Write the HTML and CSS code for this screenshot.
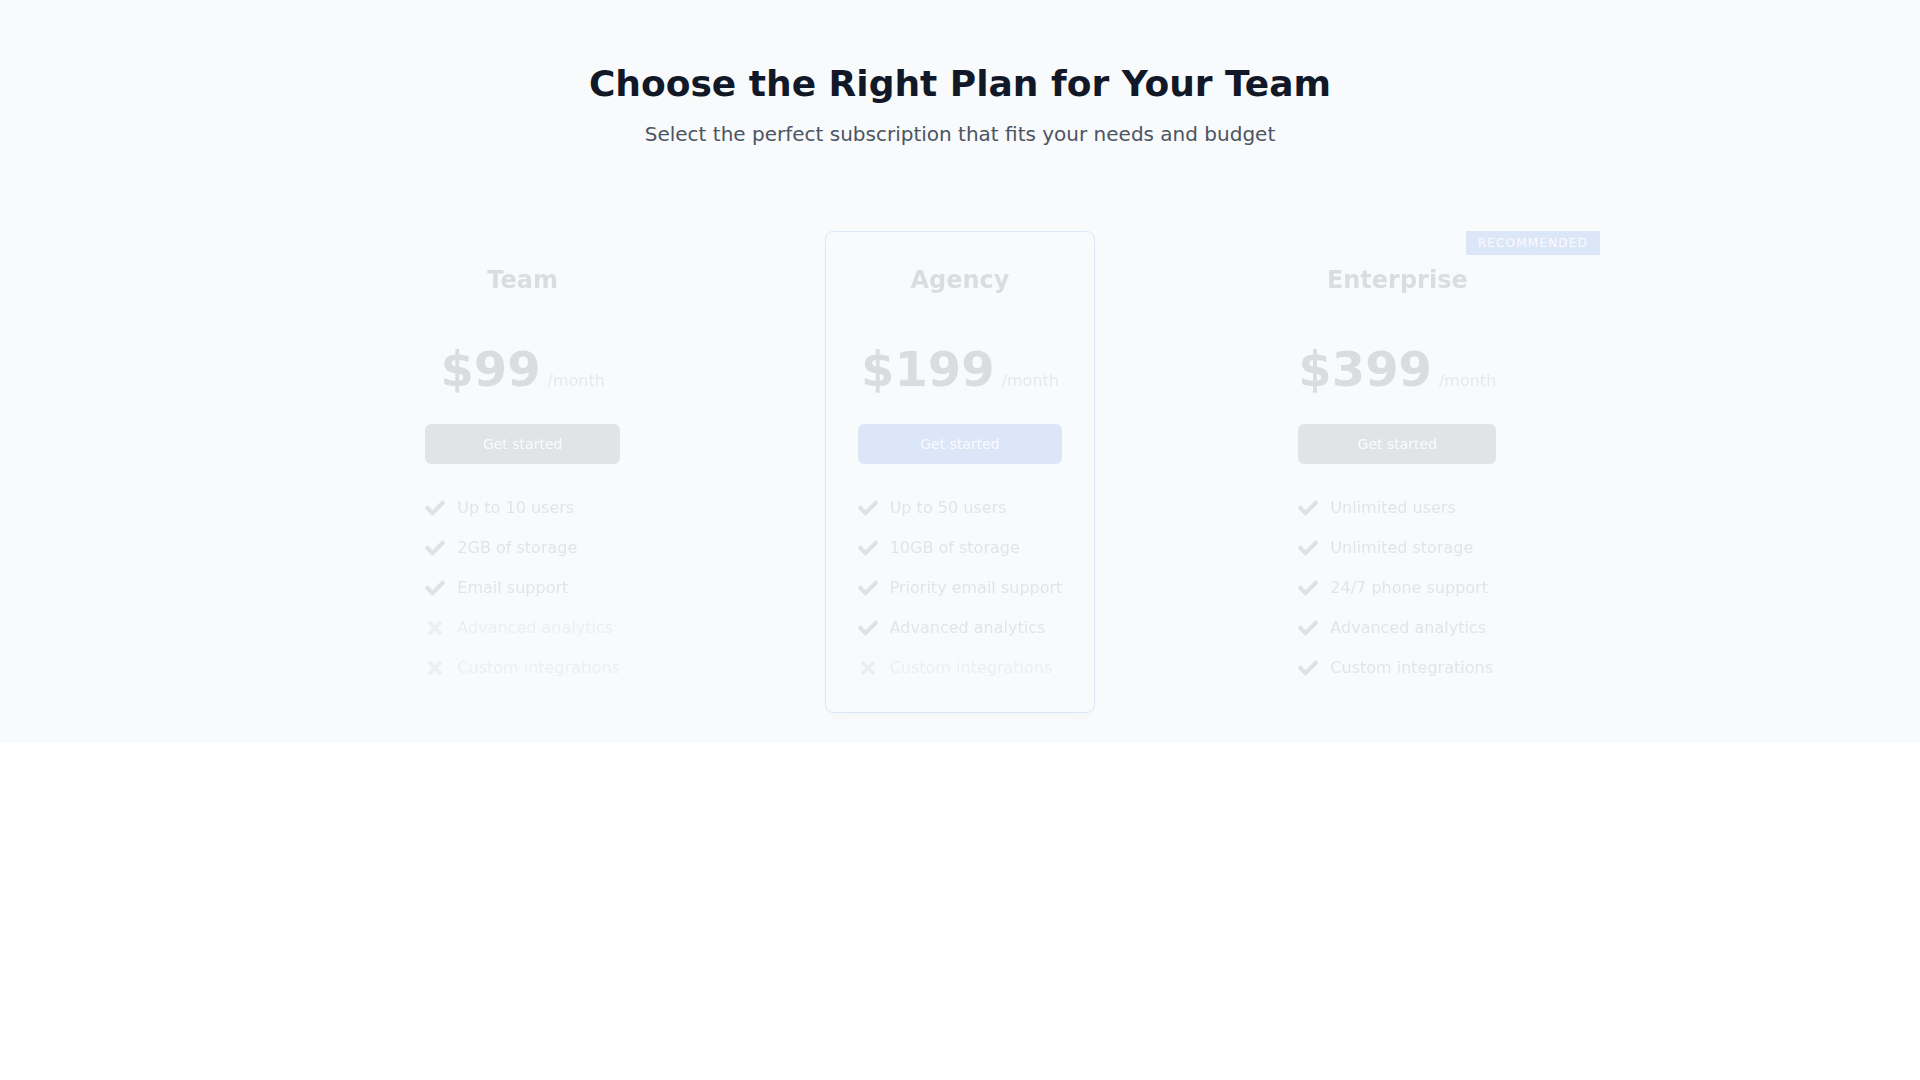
FILE: index.html
```html
<!DOCTYPE html>
<html lang="en">
<head>
<meta charset="utf-8">
<title>Pricing</title>
<link rel="stylesheet" href="styles.css">
</head>
<body>
<section class="pricing">
  <header class="pricing-header">
    <h1 class="pricing-title">Choose the Right Plan for Your Team</h1>
    <p class="pricing-subtitle">Select the perfect subscription that fits your needs and budget</p>
  </header>

  <div class="plans">
    <div class="plan-cell">
      <div class="plan-card">
        <h2 class="plan-name">Team</h2>
        <div class="plan-price"><span class="price-amount">$99</span><span class="price-period">/month</span></div>
        <button class="plan-btn">Get started</button>
        <ul class="features">
          <li class="feature"><svg class="icon icon-check" viewBox="0 0 512 512"><path d="M173.898 439.404l-166.4-166.4c-9.997-9.997-9.997-26.206 0-36.204l36.203-36.204c9.997-9.998 26.207-9.998 36.204 0L192 312.69 432.095 72.596c9.997-9.997 26.207-9.997 36.204 0l36.203 36.204c9.997 9.997 9.997 26.206 0 36.204l-294.4 294.401c-9.998 9.997-26.207 9.997-36.204-.001z"/></svg><span>Up to 10 users</span></li>
          <li class="feature"><svg class="icon icon-check" viewBox="0 0 512 512"><path d="M173.898 439.404l-166.4-166.4c-9.997-9.997-9.997-26.206 0-36.204l36.203-36.204c9.997-9.998 26.207-9.998 36.204 0L192 312.69 432.095 72.596c9.997-9.997 26.207-9.997 36.204 0l36.203 36.204c9.997 9.997 9.997 26.206 0 36.204l-294.4 294.401c-9.998 9.997-26.207 9.997-36.204-.001z"/></svg><span>2GB of storage</span></li>
          <li class="feature"><svg class="icon icon-check" viewBox="0 0 512 512"><path d="M173.898 439.404l-166.4-166.4c-9.997-9.997-9.997-26.206 0-36.204l36.203-36.204c9.997-9.998 26.207-9.998 36.204 0L192 312.69 432.095 72.596c9.997-9.997 26.207-9.997 36.204 0l36.203 36.204c9.997 9.997 9.997 26.206 0 36.204l-294.4 294.401c-9.998 9.997-26.207 9.997-36.204-.001z"/></svg><span>Email support</span></li>
          <li class="feature feature-off"><svg class="icon icon-x" viewBox="0 0 352 512"><path d="M242.72 256l100.07-100.07c12.28-12.28 12.28-32.19 0-44.48l-22.24-22.24c-12.28-12.28-32.19-12.28-44.48 0L176 189.28 75.93 89.21c-12.28-12.28-32.19-12.28-44.48 0L9.21 111.45c-12.28 12.28-12.28 32.19 0 44.48L109.28 256 9.21 356.07c-12.28 12.28-12.28 32.19 0 44.48l22.24 22.24c12.28 12.28 32.2 12.28 44.48 0L176 322.72l100.07 100.07c12.28 12.28 32.2 12.28 44.48 0l22.24-22.24c12.28-12.28 12.28-32.19 0-44.48L242.72 256z"/></svg><span>Advanced analytics</span></li>
          <li class="feature feature-off"><svg class="icon icon-x" viewBox="0 0 352 512"><path d="M242.72 256l100.07-100.07c12.28-12.28 12.28-32.19 0-44.48l-22.24-22.24c-12.28-12.28-32.19-12.28-44.48 0L176 189.28 75.93 89.21c-12.28-12.28-32.19-12.28-44.48 0L9.21 111.45c-12.28 12.28-12.28 32.19 0 44.48L109.28 256 9.21 356.07c-12.28 12.28-12.28 32.19 0 44.48l22.24 22.24c12.28 12.28 32.2 12.28 44.48 0L176 322.72l100.07 100.07c12.28 12.28 32.2 12.28 44.48 0l22.24-22.24c12.28-12.28 12.28-32.19 0-44.48L242.72 256z"/></svg><span>Custom integrations</span></li>
        </ul>
      </div>
    </div>

    <div class="plan-cell">
      <div class="plan-card plan-card-featured">
        <h2 class="plan-name">Agency</h2>
        <div class="plan-price"><span class="price-amount">$199</span><span class="price-period">/month</span></div>
        <button class="plan-btn plan-btn-primary">Get started</button>
        <ul class="features">
          <li class="feature"><svg class="icon icon-check" viewBox="0 0 512 512"><path d="M173.898 439.404l-166.4-166.4c-9.997-9.997-9.997-26.206 0-36.204l36.203-36.204c9.997-9.998 26.207-9.998 36.204 0L192 312.69 432.095 72.596c9.997-9.997 26.207-9.997 36.204 0l36.203 36.204c9.997 9.997 9.997 26.206 0 36.204l-294.4 294.401c-9.998 9.997-26.207 9.997-36.204-.001z"/></svg><span>Up to 50 users</span></li>
          <li class="feature"><svg class="icon icon-check" viewBox="0 0 512 512"><path d="M173.898 439.404l-166.4-166.4c-9.997-9.997-9.997-26.206 0-36.204l36.203-36.204c9.997-9.998 26.207-9.998 36.204 0L192 312.69 432.095 72.596c9.997-9.997 26.207-9.997 36.204 0l36.203 36.204c9.997 9.997 9.997 26.206 0 36.204l-294.4 294.401c-9.998 9.997-26.207 9.997-36.204-.001z"/></svg><span>10GB of storage</span></li>
          <li class="feature"><svg class="icon icon-check" viewBox="0 0 512 512"><path d="M173.898 439.404l-166.4-166.4c-9.997-9.997-9.997-26.206 0-36.204l36.203-36.204c9.997-9.998 26.207-9.998 36.204 0L192 312.69 432.095 72.596c9.997-9.997 26.207-9.997 36.204 0l36.203 36.204c9.997 9.997 9.997 26.206 0 36.204l-294.4 294.401c-9.998 9.997-26.207 9.997-36.204-.001z"/></svg><span>Priority email support</span></li>
          <li class="feature"><svg class="icon icon-check" viewBox="0 0 512 512"><path d="M173.898 439.404l-166.4-166.4c-9.997-9.997-9.997-26.206 0-36.204l36.203-36.204c9.997-9.998 26.207-9.998 36.204 0L192 312.69 432.095 72.596c9.997-9.997 26.207-9.997 36.204 0l36.203 36.204c9.997 9.997 9.997 26.206 0 36.204l-294.4 294.401c-9.998 9.997-26.207 9.997-36.204-.001z"/></svg><span>Advanced analytics</span></li>
          <li class="feature feature-off"><svg class="icon icon-x" viewBox="0 0 352 512"><path d="M242.72 256l100.07-100.07c12.28-12.28 12.28-32.19 0-44.48l-22.24-22.24c-12.28-12.28-32.19-12.28-44.48 0L176 189.28 75.93 89.21c-12.28-12.28-32.19-12.28-44.48 0L9.21 111.45c-12.28 12.28-12.28 32.19 0 44.48L109.28 256 9.21 356.07c-12.28 12.28-12.28 32.19 0 44.48l22.24 22.24c12.28 12.28 32.2 12.28 44.48 0L176 322.72l100.07 100.07c12.28 12.28 32.2 12.28 44.48 0l22.24-22.24c12.28-12.28 12.28-32.19 0-44.48L242.72 256z"/></svg><span>Custom integrations</span></li>
        </ul>
      </div>
    </div>

    <div class="plan-cell">
      <span class="badge">Recommended</span>
      <div class="plan-card">
        <h2 class="plan-name">Enterprise</h2>
        <div class="plan-price"><span class="price-amount">$399</span><span class="price-period">/month</span></div>
        <button class="plan-btn">Get started</button>
        <ul class="features">
          <li class="feature"><svg class="icon icon-check" viewBox="0 0 512 512"><path d="M173.898 439.404l-166.4-166.4c-9.997-9.997-9.997-26.206 0-36.204l36.203-36.204c9.997-9.998 26.207-9.998 36.204 0L192 312.69 432.095 72.596c9.997-9.997 26.207-9.997 36.204 0l36.203 36.204c9.997 9.997 9.997 26.206 0 36.204l-294.4 294.401c-9.998 9.997-26.207 9.997-36.204-.001z"/></svg><span>Unlimited users</span></li>
          <li class="feature"><svg class="icon icon-check" viewBox="0 0 512 512"><path d="M173.898 439.404l-166.4-166.4c-9.997-9.997-9.997-26.206 0-36.204l36.203-36.204c9.997-9.998 26.207-9.998 36.204 0L192 312.69 432.095 72.596c9.997-9.997 26.207-9.997 36.204 0l36.203 36.204c9.997 9.997 9.997 26.206 0 36.204l-294.4 294.401c-9.998 9.997-26.207 9.997-36.204-.001z"/></svg><span>Unlimited storage</span></li>
          <li class="feature"><svg class="icon icon-check" viewBox="0 0 512 512"><path d="M173.898 439.404l-166.4-166.4c-9.997-9.997-9.997-26.206 0-36.204l36.203-36.204c9.997-9.998 26.207-9.998 36.204 0L192 312.69 432.095 72.596c9.997-9.997 26.207-9.997 36.204 0l36.203 36.204c9.997 9.997 9.997 26.206 0 36.204l-294.4 294.401c-9.998 9.997-26.207 9.997-36.204-.001z"/></svg><span>24/7 phone support</span></li>
          <li class="feature"><svg class="icon icon-check" viewBox="0 0 512 512"><path d="M173.898 439.404l-166.4-166.4c-9.997-9.997-9.997-26.206 0-36.204l36.203-36.204c9.997-9.998 26.207-9.998 36.204 0L192 312.69 432.095 72.596c9.997-9.997 26.207-9.997 36.204 0l36.203 36.204c9.997 9.997 9.997 26.206 0 36.204l-294.4 294.401c-9.998 9.997-26.207 9.997-36.204-.001z"/></svg><span>Advanced analytics</span></li>
          <li class="feature"><svg class="icon icon-check" viewBox="0 0 512 512"><path d="M173.898 439.404l-166.4-166.4c-9.997-9.997-9.997-26.206 0-36.204l36.203-36.204c9.997-9.998 26.207-9.998 36.204 0L192 312.69 432.095 72.596c9.997-9.997 26.207-9.997 36.204 0l36.203 36.204c9.997 9.997 9.997 26.206 0 36.204l-294.4 294.401c-9.998 9.997-26.207 9.997-36.204-.001z"/></svg><span>Custom integrations</span></li>
        </ul>
      </div>
    </div>
  </div>
</section>
</body>
</html>
```

FILE: styles.css
```css
* { box-sizing: border-box; }

html, body {
  margin: 0;
  padding: 0;
  background: #ffffff;
  font-family: "DejaVu Sans", "Liberation Sans", sans-serif;
}

.pricing {
  background: #f9fafb;
  padding: 64px 0 30px;
}

.pricing-header {
  text-align: center;
}

.pricing-title {
  margin: 0;
  font-size: 36px;
  line-height: 40px;
  font-weight: 700;
  color: #111827;
}

.pricing-subtitle {
  margin: 16px 0 0;
  font-size: 20px;
  line-height: 28px;
  color: #4b5563;
}

.plans {
  max-width: 1280px;
  margin: 83px auto 0;
  display: grid;
  grid-template-columns: repeat(3, 1fr);
  gap: 32px;
  opacity: 0.13;
}

.plan-cell {
  position: relative;
  display: flex;
  justify-content: center;
}

.plan-card {
  border: 1px solid #f3f4f6;
  border-radius: 8px;
  padding: 32px;
  display: flex;
  flex-direction: column;
}

.plan-card-featured {
  border-color: #2563eb;
  box-shadow: 0 10px 15px -3px rgba(0,0,0,0.1), 0 4px 6px -4px rgba(0,0,0,0.1);
}

.plan-name {
  margin: 0;
  text-align: center;
  font-size: 24px;
  line-height: 32px;
  font-weight: 700;
  color: #111827;
}

.plan-price {
  margin-top: 49px;
  display: flex;
  justify-content: center;
  align-items: baseline;
  gap: 7px;
}

.price-amount {
  font-size: 48px;
  line-height: 48px;
  font-weight: 700;
  color: #111827;
}

.price-period {
  font-size: 16px;
  line-height: 24px;
  color: #6b7280;
}

.plan-btn {
  margin-top: 31px;
  height: 40px;
  border: 0;
  border-radius: 6px;
  background: #4b5563;
  color: #ffffff;
  font-family: inherit;
  font-size: 14px;
  line-height: 20px;
  padding: 0 16px;
}

.plan-btn-primary {
  background: #2563eb;
}

.features {
  list-style: none;
  margin: 32px 0 0;
  padding: 0;
  display: flex;
  flex-direction: column;
  gap: 16px;
}

.feature {
  display: flex;
  align-items: center;
  gap: 12px;
  font-size: 16px;
  line-height: 24px;
  color: #4b5563;
  white-space: nowrap;
}

.feature-off {
  color: #9ca3af;
}

.icon {
  width: 20px;
  height: 20px;
  flex: none;
}

.icon-check { fill: #374151; }
.icon-x { fill: #9ca3af; }

.badge {
  position: absolute;
  top: 0;
  right: 0;
  background: #2563eb;
  color: #ffffff;
  font-size: 12px;
  line-height: 16px;
  letter-spacing: 1.2px;
  text-transform: uppercase;
  padding: 4px 12px;
  border-bottom-left-radius: 2px;
}
```
